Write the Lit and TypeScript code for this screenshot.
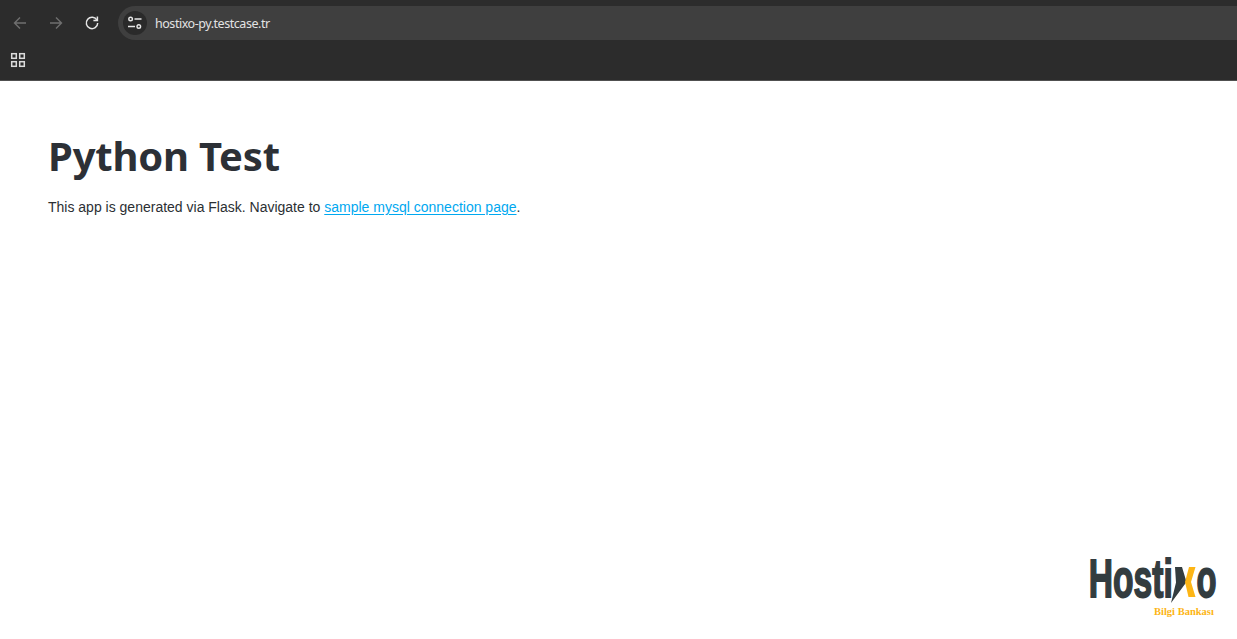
import { LitElement, html, css, svg } from "lit";
import { customElement } from "lit/decorators.js";

@customElement("app-root")
export class AppRoot extends LitElement {
  static styles = css`
    :host { display: block; width: 100%; height: 639px; position: relative; background: #fff; overflow: hidden; font-family: "Liberation Sans", Arial, sans-serif; }
    .chrome { background: #2c2c2c; height: 81px; box-sizing: border-box; border-bottom: 1px solid #505050; display: flex; flex-direction: column; }
    .toolbar { height: 40px; box-sizing: border-box; padding-top: 6px; display: flex; align-items: stretch; }
    .nav { width: 36px; display: flex; align-items: center; justify-content: center; }
    .nav svg { display: block; }
    .navs { display: flex; padding-left: 2px; width: 118px; box-sizing: border-box; }
    .omni { flex: 1; background: #3f3f3f; border-radius: 17px 0 0 17px; display: flex; align-items: center; padding-left: 5px; gap: 8px; }
    .tune { width: 24px; height: 24px; border-radius: 50%; background: #2a2a2a; display: flex; align-items: center; justify-content: center; }
    .url { color: #e3e3e3; font: 12.5px "Noto Sans", "Open Sans", sans-serif; letter-spacing: -0.46px; }
    .bookmarks { height: 40px; display: flex; align-items: center; padding-left: 10px; }
    main { padding: 51px 48px 0; color: #212529; }
    h1 { margin: 0 0 17px; font: 700 40px/48px "Noto Sans", "Open Sans", sans-serif; color: #2c3036; letter-spacing: -0.2px; }
    p { margin: 0; font-size: 14px; line-height: 21px; color: #2b2f33; }
    a { color: #00a8f0; text-decoration: underline; text-underline-offset: 2px; }
    .logo { position: absolute; left: 1088px; top: 545px; }
  `;

  render() {
    return html`
      <div class="chrome">
        <div class="toolbar">
          <div class="navs">
            <div class="nav">
              <svg width="16" height="16" viewBox="0 0 16 16" fill="none" stroke="#6f6f6f" stroke-width="1.4"><path d="M14 8H2.5M8 2.5L2.5 8L8 13.500"/></svg>
            </div>
            <div class="nav">
              <svg width="16" height="16" viewBox="0 0 16 16" fill="none" stroke="#6f6f6f" stroke-width="1.4"><path d="M2 8h11.5M8 2.5L13.5 8L8 13.500"/></svg>
            </div>
            <div class="nav">
              <svg width="16" height="16" viewBox="0 0 16 16" fill="none" stroke="#e6e6e6" stroke-width="1.5"><path d="M13 5.2A5.7 5.7 0 1 0 13.7 8"/><path d="M13.4 1.6v4h-4" /></svg>
            </div>
          </div>
          <div class="omni">
            <div class="tune">
              <svg width="16" height="16" viewBox="0 0 16 16" fill="none" stroke="#e8e8e8" stroke-width="1.4"><circle cx="3.6" cy="4" r="1.8"/><path d="M7.5 4h7M1 11.5h7"/><circle cx="11.8" cy="11.5" r="1.8"/></svg>
            </div>
            <span class="url">hostixo-py.testcase.tr</span>
          </div>
        </div>
        <div class="bookmarks">
          <svg width="16" height="16" viewBox="0 0 16 16" fill="none" stroke="#dcdcdc" stroke-width="1.5"><rect x="1.7" y="1.7" width="4.6" height="4.6"/><rect x="9.7" y="1.7" width="4.6" height="4.6"/><rect x="1.7" y="9.7" width="4.6" height="4.6"/><rect x="9.7" y="9.7" width="4.6" height="4.6"/></svg>
        </div>
      </div>
      <main>
        <h1>Python Test</h1>
        <p>This app is generated via Flask. Navigate to <a href="#">sample mysql connection page</a>.</p>
      </main>
      <svg class="logo" width="140" height="75" viewBox="0 0 140 75">
        ${svg`
        <text x="0.800" y="52" font-family="Liberation Sans" font-weight="700" font-size="54" fill="#333c3f" stroke="#333c3f" stroke-width="1.8" textLength="84" lengthAdjust="spacingAndGlyphs">Hosti</text>
        <path d="M87 22h7l4.500 15L83 58l5-20.500z" fill="#333c3f"/>
        <path d="M101 22h6.500l-4.500 15 4.500 15h-7L97 37z" fill="#fdb515"/>
        <text x="108.500" y="52" font-family="Liberation Sans" font-weight="700" font-size="54" fill="#333c3f" stroke="#333c3f" stroke-width="1.8" textLength="20" lengthAdjust="spacingAndGlyphs">o</text>
        <text x="66" y="70" font-family="Liberation Serif" font-weight="700" font-size="10.500" fill="#fdb515">Bilgi Bankası</text>
        `}
      </svg>
    `;
  }
}
